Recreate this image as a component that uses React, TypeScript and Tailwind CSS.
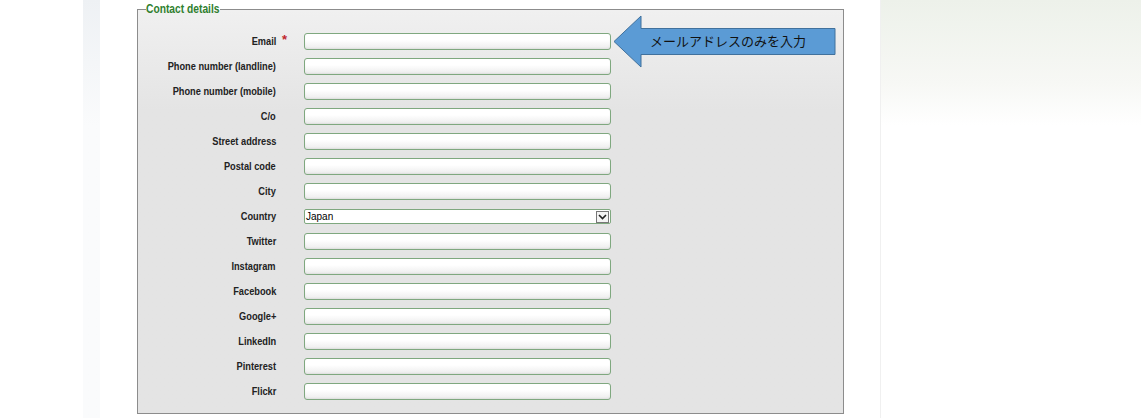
const fields = [
  'Email',
  'Phone number (landline)',
  'Phone number (mobile)',
  'C/o',
  'Street address',
  'Postal code',
  'City',
  'Country',
  'Twitter',
  'Instagram',
  'Facebook',
  'Google+',
  'LinkedIn',
  'Pinterest',
  'Flickr',
];

function TextBox() {
  return (
    <input
      type="text"
      className="h-[17px] w-[307px] rounded-[3px] border border-[#7fa87f] bg-gradient-to-b from-white from-40% to-[#ececec] shadow-[inset_0_-1px_2px_rgba(0,0,0,0.06)] outline-none"
    />
  );
}

function CountrySelect() {
  return (
    <div className="flex h-[15px] w-[307px] items-center rounded-[2px] border border-[#7fa87f] bg-white">
      <span className="flex-1 pl-[1px] text-[10px] leading-none text-black">Japan</span>
      <div className="mr-[1px] flex h-[12px] w-[13px] items-center justify-center border border-[#777] bg-[#f4f4f4]">
        <svg width="9" height="6" viewBox="0 0 9 6">
          <path d="M1 1l3.5 3.5L8 1" fill="none" stroke="#222" strokeWidth="1.6" />
        </svg>
      </div>
    </div>
  );
}

export default function App() {
  return (
    <div className="relative flex h-[418px] w-[1141px] bg-white font-['Liberation_Sans',Arial,sans-serif]">
      <div className="w-[83px] shrink-0" />
      <div className="w-[17px] shrink-0 bg-gradient-to-b from-[#eef1f4] to-[#fafbfc] to-30%" />

      <div className="w-[780px] shrink-0 bg-white pl-[37px] pt-[2px]">
        <fieldset className="w-[707px] border border-[#8c8c8c] bg-gradient-to-b from-[#f0f0f0] to-[#e4e4e4] to-25% px-[8px] pb-[9px] pt-[13px]">
          <legend className="text-[12.5px] font-bold leading-[14px] text-[#2f7f2f]">
            <span className="mr-[-16px] inline-block origin-left scale-x-[0.82]">Contact details</span>
          </legend>
          <div className="flex flex-col">
            {fields.map((f) => (
              <div key={f} className="flex h-[25px] items-center">
                <div className="w-[130px] text-right text-[11px] font-bold text-[#222]">
                  <span className="inline-block origin-right scale-x-[0.84]">{f}</span>
                </div>
                <div className="w-[28px] pl-[6px]">
                  {f === 'Email' && <span className="relative -top-[3px] text-[13px] font-bold text-[#c0272d]">*</span>}
                </div>
                {f === 'Country' ? <CountrySelect /> : <TextBox />}
              </div>
            ))}
          </div>
        </fieldset>
      </div>

      <div className="flex-1 border-l border-[#f0f0f0] bg-gradient-to-b from-[#edf1ea] via-[#f7f8f5] via-20% to-white to-30%" />

      <div className="absolute left-[613px] top-[15px] h-[54px] w-[224px]">
        <svg width="224" height="54" viewBox="0 0 224 54" className="absolute inset-0">
          <path d="M1 26.5L28 1V13.5H222V39.5H28V52Z" fill="#5b9bd5" stroke="#41719c" strokeWidth="1" />
        </svg>
        <span className="absolute left-[37px] top-[17px] text-[13px] leading-[18px] text-[#111] font-['Noto_Sans_CJK_JP',sans-serif]">
          メールアドレスのみを入力
        </span>
      </div>
    </div>
  );
}
